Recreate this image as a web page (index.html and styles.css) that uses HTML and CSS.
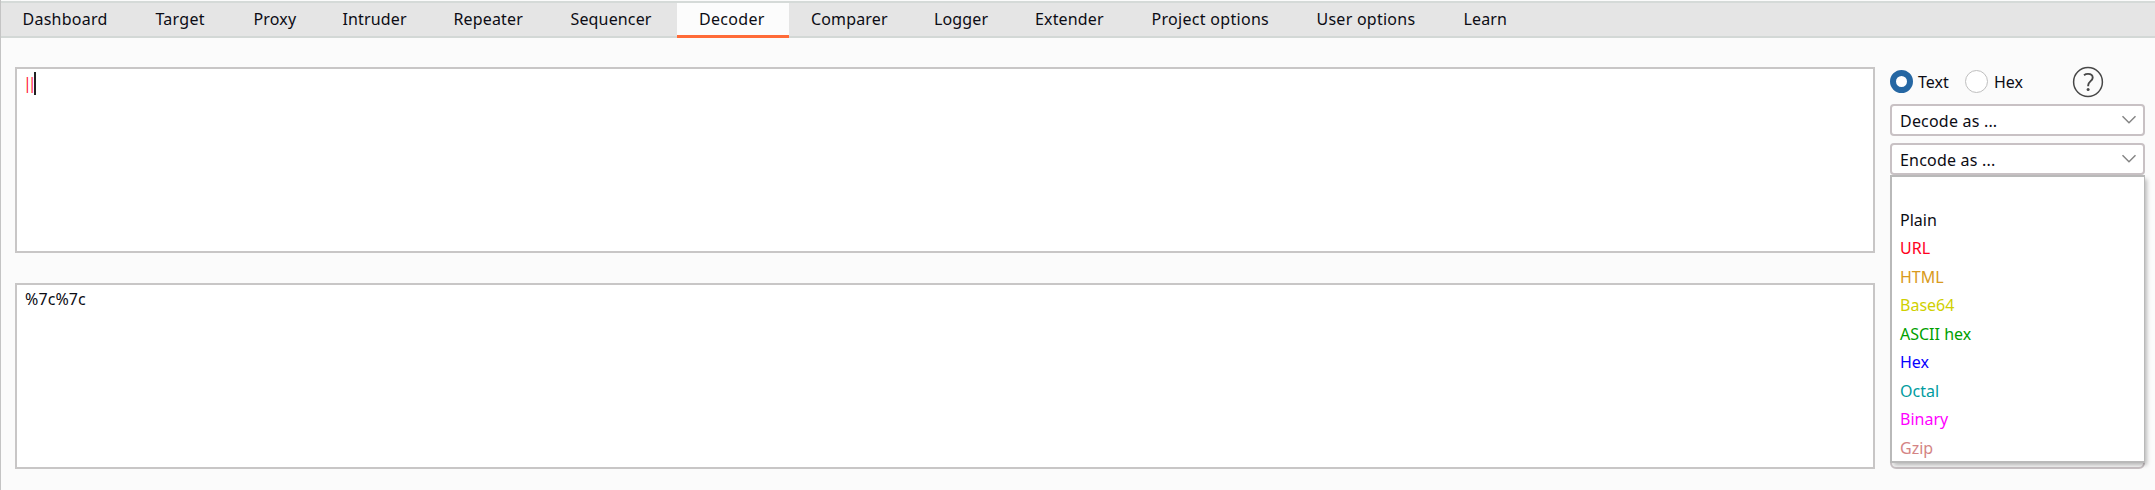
FILE: index.html
```html
<!DOCTYPE html>
<html lang="en">
<head>
<meta charset="utf-8">
<title>Decoder</title>
<link rel="stylesheet" href="styles.css">
</head>
<body>
<div class="app">
  <nav class="tabs">
    <div class="tab dashboard">Dashboard</div>
    <div class="tab target">Target</div>
    <div class="tab proxy">Proxy</div>
    <div class="tab intruder">Intruder</div>
    <div class="tab repeater">Repeater</div>
    <div class="tab sequencer">Sequencer</div>
    <div class="tab decoder active">Decoder</div>
    <div class="tab comparer">Comparer</div>
    <div class="tab logger">Logger</div>
    <div class="tab extender">Extender</div>
    <div class="tab project">Project options</div>
    <div class="tab user">User options</div>
    <div class="tab learn">Learn</div>
  </nav>
  <main class="main">
    <section class="panels">
      <div class="panel"><span class="pipes">||</span><span class="caret"></span></div>
      <div class="panel"><span class="result">%7c%7c</span></div>
    </section>
    <aside class="side">
      <div class="modes">
        <span class="radio on"></span><span class="mode-text">Text</span>
        <span class="radio"></span><span class="mode-hex">Hex</span>
        <svg class="help" width="32" height="32" viewBox="0 0 32 32" fill="none">
          <circle cx="16" cy="16" r="14.4" stroke="#484848" stroke-width="1.5"/>
          <path d="M12 9.2C13.3 8.2 14.6 7.9 16 7.9C18.9 7.9 20.7 9.4 20.7 11.7C20.7 15 16.2 15.4 16.2 19.3V20.2" stroke="#484848" stroke-width="1.9"/>
          <circle cx="16.1" cy="23.6" r="1.5" fill="#484848"/>
        </svg>
      </div>
      <div class="combo"><span>Decode as ...</span><svg width="16" height="10" viewBox="0 0 16 10" fill="none"><path d="M1.5 1.3L8 7.8L14.5 1.3" stroke="#858585" stroke-width="1.5"/></svg></div>
      <div class="combo"><span>Encode as ...</span><svg width="16" height="10" viewBox="0 0 16 10" fill="none"><path d="M1.5 1.3L8 7.8L14.5 1.3" stroke="#858585" stroke-width="1.5"/></svg></div>
      <div class="hidden-combo"></div>
      <ul class="menu">
        <li></li>
        <li>Plain</li>
        <li class="c-url">URL</li>
        <li class="c-html">HTML</li>
        <li class="c-base">Base64</li>
        <li class="c-ascii">ASCII hex</li>
        <li class="c-hex">Hex</li>
        <li class="c-octal">Octal</li>
        <li class="c-binary">Binary</li>
        <li class="c-gzip">Gzip</li>
      </ul>
    </aside>
  </main>
</div>
</body>
</html>
```
FILE: styles.css
```css
* { box-sizing: border-box; }
body {
  margin: 0;
  background: #fbfbfb;
  color: #0c0c14;
  font: 16px/22px "Noto Sans", "Open Sans", sans-serif;
}
.app {
  height: 490px;
  padding-top: 1px;
  border-left: 1px solid #c4c4c4;
  overflow: hidden;
}
.tabs {
  display: flex;
  height: 37px;
  padding-left: 2px;
  border-top: 2px solid #d5dad8;
  border-bottom: 2px solid #d3d8d6;
  background: #e5e5e5;
  letter-spacing: .15px;
}
.tab {
  flex-shrink: 0;
  height: 33px;
  padding: 5px 0 0 21px;
  white-space: nowrap;
}
.active {
  height: 35px;
  background: #fcfcfc;
  border-bottom: 3px solid #ff6b38;
}
.dashboard { width: 132.5px; padding-left: 19.5px; letter-spacing: .25px; }
.target { width: 98px; padding-left: 20px; letter-spacing: .25px; }
.proxy { width: 88px; padding-left: 20px; }
.intruder { width: 111px; }
.repeater { width: 117px; }
.sequencer { width: 127.5px; }
.decoder { width: 112px; padding-left: 22px; letter-spacing: .3px; }
.comparer { width: 123px; padding-left: 22px; }
.logger { width: 102px; padding-left: 22px; }
.extender { width: 115px; }
.project { width: 165px; padding-left: 22.5px; letter-spacing: .3px; }
.user { width: 147px; padding-left: 22.5px; letter-spacing: .25px; }
.learn { width: 90px; padding-left: 22.5px; }
.main {
  display: flex;
  gap: 15px;
  padding: 29px 9px 0 14px;
}
.panels {
  display: flex;
  flex-direction: column;
  flex-shrink: 0;
  gap: 30px;
  width: 1860px;
}
.panel {
  display: flex;
  height: 186px;
  padding: 3px 0 0 8px;
  background: #fff;
  border: 2px solid #c8c6c6;
}
.pipes {
  width: 9px;
  color: #ff2038;
  letter-spacing: -4px;
  text-indent: -2px;
}
.result { letter-spacing: .1px; }
.caret { width: 2px; height: 23px; background: #222; }
.side { position: relative; width: 255px; }
.modes { display: flex; align-items: center; height: 29px; }
.radio {
  flex-shrink: 0;
  width: 23px;
  height: 23px;
  border: 1.5px solid #bfbfbf;
  border-radius: 50%;
  background: #fff;
}
.on { border: 6px solid #2667a3; }
.mode-text { width: 47px; margin-left: 5px; }
.mode-hex { width: 78px; margin-left: 6px; }
.help { flex-shrink: 0; }
.combo {
  display: flex;
  align-items: center;
  justify-content: space-between;
  height: 32px;
  margin: 8px 0 0;
  padding: 1px 6px 0 8px;
  border: 2px solid #c8c1c4;
  border-radius: 4px;
  background: #fff;
  letter-spacing: .2px;
}
.combo svg { margin-bottom: 2px; }
.combo + .combo { margin-top: 7px; }
.hidden-combo {
  position: absolute;
  top: 380px;
  width: 255px;
  height: 22px;
  border: 2px solid #c8c1c4;
  border-radius: 6px;
  background: #f4f4f4;
}
.menu {
  position: absolute;
  top: 108px;
  left: 0;
  width: 255px;
  height: 288px;
  margin: 0;
  padding: 0 0 0 8px;
  list-style: none;
  border: 2px solid #b9b9b9;
  border-right-width: 1px;
  background: #fff;
  box-shadow: 3px 3px 4px -1px rgba(0, 0, 0, .25);
}
.menu li { height: 28.5px; padding-top: 3px; }
.c-url { color: #ff0020; }
.c-html { color: #d89a20; }
.c-base { color: #d0d000; }
.c-ascii { color: #00a000; }
.c-hex { color: #0800ff; }
.c-octal { color: #009ca0; }
.c-binary { color: #ff00ff; }
.c-gzip { color: #d48484; }
```
